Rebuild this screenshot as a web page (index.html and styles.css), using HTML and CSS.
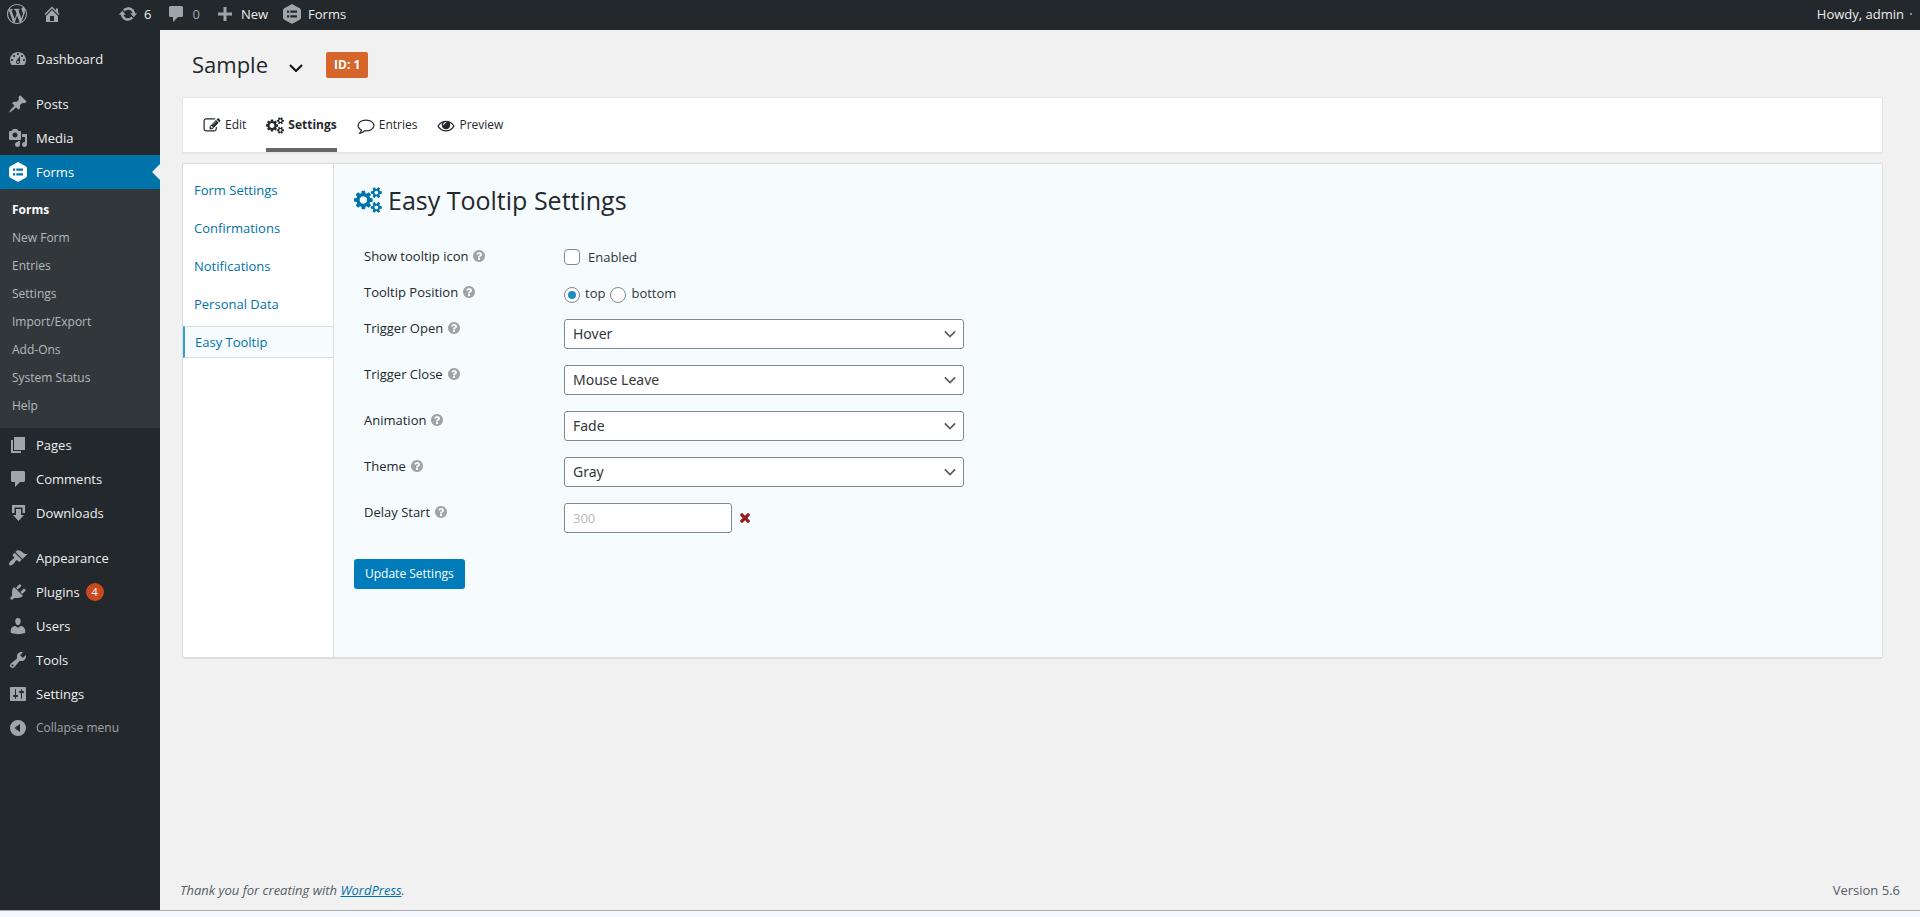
FILE: index.html
```html
<!DOCTYPE html>
<html lang="en">
<head>
<meta charset="utf-8">
<title>Easy Tooltip Settings</title>
<meta name="viewport" content="width=device-width, initial-scale=1">
<link rel="stylesheet" href="styles.css">
</head>
<body>
<svg class="sprite" aria-hidden="true">
  <symbol id="i-wp" viewBox="0 0 20 20"><path d="M20 10c0-5.51-4.49-10-10-10C4.48 0 0 4.49 0 10c0 5.52 4.48 10 10 10 5.51 0 10-4.48 10-10zM7.78 15.37L4.37 6.22c.55-.02 1.17-.08 1.17-.08.5-.06.44-1.13-.06-1.11 0 0-1.45.11-2.37.11-.18 0-.37 0-.58-.01C4.12 2.69 6.87 1.11 10 1.11c2.33 0 4.45.87 6.05 2.34-.68-.11-1.65.39-1.65 1.58 0 .74.45 1.36.9 2.1.35.61.55 1.36.55 2.46 0 1.49-1.4 5-1.4 5l-3.03-8.37c.54-.02.82-.17.82-.17.5-.05.44-1.25-.06-1.22 0 0-1.44.12-2.38.12-.87 0-2.33-.12-2.33-.12-.5-.03-.56 1.2-.06 1.22l.92.08 1.26 3.41zM17.41 10c.24-.64.74-1.87.43-4.25.7 1.29 1.05 2.71 1.05 4.25 0 3.29-1.73 6.24-4.4 7.78.97-2.59 1.94-5.2 2.92-7.78zM6.1 18.09C3.12 16.65 1.11 13.53 1.11 10c0-1.3.23-2.48.72-3.59C3.25 10.3 4.67 14.2 6.1 18.09zm4.03-6.63l2.58 6.98c-.86.29-1.76.45-2.71.45-.79 0-1.57-.11-2.29-.33.81-2.38 1.62-4.74 2.42-7.1z"/></symbol>
  <symbol id="i-home" viewBox="0 0 20 20"><path d="M16 8.5l1.53 1.53-1.06 1.06L10 4.6l-6.47 6.49-1.06-1.06L10 2.5l4 4v-2h2v4zm-6-2.46l6 5.99V18H4v-5.97zM12 17v-5H8v5h4z"/></symbol>
  <symbol id="i-update" viewBox="0 0 20 20"><path d="M10.2 3.28c3.53 0 6.43 2.61 6.92 6h2.08l-3.5 4-3.5-4h2.32c-.45-1.97-2.21-3.45-4.32-3.45-1.45 0-2.73.71-3.54 1.78L4.95 5.66C6.23 4.2 8.11 3.28 10.2 3.28zm-.4 13.44c-3.52 0-6.43-2.61-6.92-6H.8l3.5-4c1.17 1.33 2.33 2.67 3.5 4H5.48c.45 1.97 2.21 3.45 4.32 3.45 1.45 0 2.73-.71 3.54-1.78l1.71 1.95c-1.28 1.46-3.15 2.38-5.25 2.38z"/></symbol>
  <symbol id="i-comment" viewBox="0 0 20 20"><path d="M4.500 2h11c.8 0 1.500.7 1.500 1.500v8c0 .8-.7 1.500-1.500 1.500H12l-5 5v-5H4.500C3.700 13 3 12.300 3 11.500v-8C3 2.700 3.700 2 4.500 2z"/></symbol>
  <symbol id="i-plus" viewBox="0 0 20 20"><path d="M17 8.500v3h-5.500V17h-3v-5.500H3v-3h5.500V3h3v5.500z"/></symbol>
  <symbol id="i-hex" viewBox="0 0 20 20"><path fill-rule="evenodd" d="M8.700.7c.8-.5 1.800-.5 2.600 0l6.400 3.600c.8.500 1.300 1.300 1.300 2.200v7c0 .9-.5 1.700-1.300 2.200l-6.400 3.600c-.8.500-1.800.5-2.600 0l-6.400-3.600C1.500 15.200 1 14.400 1 13.500v-7c0-.9.500-1.700 1.300-2.200zM5 6.500v2.200h2.200V6.500zm3.300 0v2.200H15V6.500zM5 11.300v2.200h2.200v-2.200zm3.300 0v2.200H15v-2.200z"/></symbol>
  <symbol id="i-dashboard" viewBox="0 0 20 20"><path d="M3.760 16h12.480c1.100-1.370 1.760-3.110 1.760-5 0-4.420-3.580-8-8-8s-8 3.580-8 8c0 1.890.66 3.630 1.760 5zM10 4c.55 0 1 .45 1 1s-.45 1-1 1-1-.45-1-1 .45-1 1-1zM6 6c.55 0 1 .45 1 1s-.45 1-1 1-1-.45-1-1 .45-1 1-1zm8 0c.55 0 1 .45 1 1s-.45 1-1 1-1-.45-1-1 .45-1 1-1zm-5.370 5.550L12 7v6c0 1.100-.9 2-2 2s-2-.9-2-2c0-.57.24-1.080.63-1.450zM4 10c.55 0 1 .45 1 1s-.45 1-1 1-1-.45-1-1 .45-1 1-1zm12 0c.55 0 1 .45 1 1s-.45 1-1 1-1-.45-1-1 .45-1 1-1zm-5 3c0-.55-.45-1-1-1s-1 .45-1 1 .45 1 1 1 1-.45 1-1z"/></symbol>
  <symbol id="i-post" viewBox="0 0 20 20"><path d="M10.440 3.020l1.820-1.820 6.360 6.350-1.830 1.820c-1.050-.68-2.480-.57-3.410.36l-.75.75c-.92.93-1.040 2.350-.35 3.410l-1.830 1.820-2.410-2.410-2.800 2.790c-.42.42-3.380 2.710-3.800 2.290s1.860-3.390 2.280-3.810l2.790-2.790L4.100 9.360l1.830-1.820c1.050.69 2.480.57 3.400-.36l.75-.75c.93-.92 1.050-2.350.36-3.410z"/></symbol>
  <symbol id="i-media" viewBox="0 0 20 20"><path d="M13 11V4c0-.55-.45-1-1-1h-1.670L9 1H5L3.670 3H2c-.55 0-1 .45-1 1v7c0 .55.45 1 1 1h10c.55 0 1-.45 1-1zM7 4.500c1.380 0 2.500 1.120 2.500 2.500S8.380 9.500 7 9.500 4.500 8.380 4.500 7 5.620 4.500 7 4.500zM14 6h5v10.500c0 1.380-1.120 2.500-2.500 2.500S14 17.880 14 16.500s1.120-2.500 2.500-2.500c.17 0 .34.02.5.05V9h-3V6zm-4 8.050V13h2v3.500c0 1.380-1.120 2.500-2.500 2.500S7 17.880 7 16.500 8.120 14 9.500 14c.17 0 .34.02.5.05z"/></symbol>
  <symbol id="i-page" viewBox="0 0 20 20"><path d="M6 15V2h11v13H6zm-1 1h8v2H3V5h2v11z"/></symbol>
  <symbol id="i-download" viewBox="0 0 20 20"><path d="M4 2h13v8h-2.500V4.500h-8V10H4zM8 6h5v6h3l-5.500 6L5 12h3z"/></symbol>
  <symbol id="i-appearance" viewBox="0 0 20 20"><path d="M14.480 11.060L7.410 3.990l1.500-1.500c.5-.56 2.300-.47 3.510.32 1.210.8 1.430 1.280 2.910 2.100 1.180.64 2.450 1.260 4.450.85zm-.71.71L6.700 4.700 4.930 6.470c-.39.39-.39 1.020 0 1.410l1.060 1.060c.39.39.39 1.030 0 1.420-.6.6-1.430 1.110-2.210 1.690-.35.26-.7.53-1.010.84C1.430 14.230.4 16.080 1.400 17.070c.99 1 2.840-.03 4.180-1.360.31-.31.58-.66.85-1.020.57-.78 1.080-1.610 1.690-2.210.39-.39 1.020-.39 1.410 0l1.060 1.060c.39.39 1.020.39 1.410 0z"/></symbol>
  <symbol id="i-plugins" viewBox="0 0 20 20"><path d="M13.110 4.360L9.870 7.600 8 5.730l3.240-3.240c.35-.34 1.050-.2 1.560.32.52.51.66 1.210.31 1.550zm-8 1.770l.91-1.120 9.010 9.010-1.190.84c-.71.71-2.630 1.160-3.820 1.160H6.140L4.900 17.260c-.59.59-1.540.59-2.120 0-.59-.58-.59-1.530 0-2.120l1.240-1.240v-3.880c0-1.130.4-3.190 1.090-3.890zm7.260 3.970l3.240-3.240c.34-.35 1.040-.21 1.550.31.52.51.66 1.210.31 1.550l-3.240 3.250z"/></symbol>
  <symbol id="i-users" viewBox="0 0 20 20"><path d="M10 9.250c-2.270 0-2.730-3.440-2.730-3.440C7 4.020 7.820 2 9.970 2c2.160 0 2.980 2.020 2.710 3.810 0 0-.41 3.440-2.680 3.440zm0 2.570L12.720 10c2.390 0 4.520 2.330 4.520 4.530v2.490s-3.650 1.130-7.240 1.130c-3.650 0-7.240-1.130-7.240-1.130v-2.490c0-2.250 1.940-4.480 4.470-4.480z"/></symbol>
  <symbol id="i-tools" viewBox="0 0 20 20"><path d="M16.680 9.770c-1.340 1.340-3.300 1.670-4.950.99l-5.410 6.520c-.99.99-2.590.99-3.580 0s-.99-2.590 0-3.570l6.520-5.420c-.68-1.650-.35-3.610.99-4.950 1.280-1.280 3.120-1.620 4.720-1.060l-2.890 2.890 2.820 2.820 2.860-2.870c.53 1.580.18 3.390-1.080 4.650zM3.810 16.210c.4.39 1.040.39 1.430 0 .4-.4.4-1.040 0-1.430-.39-.4-1.030-.4-1.430 0-.39.39-.39 1.030 0 1.430z"/></symbol>
  <symbol id="i-settings" viewBox="0 0 20 20"><path d="M18 16V4c0-.55-.45-1-1-1H3c-.55 0-1 .45-1 1v12c0 .55.45 1 1 1h14c.55 0 1-.45 1-1zM8 11h1c.55 0 1 .45 1 1s-.45 1-1 1H8v1.500c0 .28-.22.5-.5.5s-.5-.22-.5-.5V13H6c-.55 0-1-.45-1-1s.45-1 1-1h1V5.500c0-.28.22-.5.5-.5s.5.22.5.5V11zm5-2h-1c-.55 0-1-.45-1-1s.45-1 1-1h1V5.500c0-.28.22-.5.5-.5s.5.22.5.5V7h1c.55 0 1 .45 1 1s-.45 1-1 1h-1v5.500c0 .28-.22.5-.5.5s-.5-.22-.5-.5V9z"/></symbol>
  <symbol id="i-collapse" viewBox="0 0 20 20"><path fill-rule="evenodd" d="M10 2a8 8 0 1 0 0 16 8 8 0 0 0 0-16zm2 12L6.500 10 12 6z"/></symbol>
  <symbol id="i-edit" viewBox="0 0 1792 1792"><path d="M888 1184l116-116-152-152-116 116v56h96v96h56zm440-720q-16-16-33 1l-350 350q-17 17-1 33t33-1l350-350q17-17 1-33zm80 594v190q0 119-84.500 203.500t-203.500 84.500h-832q-119 0-203.500-84.500t-84.500-203.500v-832q0-119 84.500-203.500t203.500-84.500h832q63 0 117 25 15 7 18 23 3 17-9 29l-49 49q-14 14-32 8-23-6-45-6h-832q-66 0-113 47t-47 113v832q0 66 47 113t113 47h832q66 0 113-47t47-113v-126q0-13 9-22l64-64q15-15 35-7t20 29zm-96-738l288 288-672 672h-288v-288zm444 132l-92 92-288-288 92-92q28-28 68-28t68 28l152 152q28 28 28 68t-28 68z"/></symbol>
  <symbol id="i-cogs" viewBox="0 0 1920 1792"><path d="M896 896q0-106-75-181t-181-75-181 75-75 181 75 181 181 75 181-75 75-181zm768 512q0-52-38-90t-90-38-90 38-38 90q0 53 37.500 90.500t90.500 37.500 90.500-37.500 37.500-90.500zm0-1024q0-52-38-90t-90-38-90 38-38 90q0 53 37.500 90.500t90.500 37.500 90.500-37.500 37.500-90.500zm-384 421v185q0 10-7 19.500t-16 10.500l-155 24q-11 35-32 76 34 48 90 115 7 11 7 20 0 12-7 19-23 30-82.500 89.500t-78.500 59.500q-11 0-21-7l-115-90q-37 19-77 31-11 108-23 155-7 24-30 24h-186q-11 0-20-7.500t-10-17.500l-23-153q-34-10-75-31l-118 89q-7 7-20 7-11 0-21-8-144-133-144-160 0-9 7-19 10-14 41-53t47-61q-23-44-35-82l-152-24q-10-1-17-9.500t-7-19.500v-185q0-10 7-19.500t16-10.500l155-24q11-35 32-76-34-48-90-115-7-11-7-20 0-12 7-20 22-30 82-89t79-59q11 0 21 7l115 90q34-18 77-32 11-108 23-154 7-24 30-24h186q11 0 20 7.500t10 17.500l23 153q34 10 75 31l118-89q8-7 20-7 11 0 21 8 144 133 144 160 0 8-7 19-12 16-42 54t-45 60q23 48 34 82l152 23q10 2 17 10.500t7 19.500zm640 533v140q0 16-149 31-12 27-30 52 51 113 51 138 0 4-4 7-122 71-124 71-8 0-46-47t-52-68q-20 2-30 2t-30-2q-14 21-52 68t-46 47q-2 0-124-71-4-3-4-7 0-25 51-138-18-25-30-52-149-15-149-31v-140q0-16 149-31 13-29 30-52-51-113-51-138 0-4 4-7 4-2 35-20t59-34 30-16q8 0 46 46.500t52 67.500q20-2 30-2t30 2q51-71 92-112l6-2q4 0 124 70 4 3 4 7 0 25-51 138 17 23 30 52 149 15 149 31zm0-1024v140q0 16-149 31-12 27-30 52 51 113 51 138 0 4-4 7-122 71-124 71-8 0-46-47t-52-68q-20 2-30 2t-30-2q-14 21-52 68t-46 47q-2 0-124-71-4-3-4-7 0-25 51-138-18-25-30-52-149-15-149-31v-140q0-16 149-31 13-29 30-52-51-113-51-138 0-4 4-7 4-2 35-20t59-34 30-16q8 0 46 46.500t52 67.500q20-2 30-2t30 2q51-71 92-112l6-2q4 0 124 70 4 3 4 7 0 25-51 138 17 23 30 52 149 15 149 31z"/></symbol>
  <symbol id="i-bubble" viewBox="0 0 1792 1792"><path d="M896 384q-204 0-381.500 69.500t-282 187.500-104.500 255q0 112 71.500 213.500t201.500 175.500l87 50-27 96q-24 91-70 172 152-63 275-171l43-38 57 6q69 8 130 8 204 0 381.500-69.500t282-187.500 104.500-255-104.500-255-282-187.500-381.500-69.500zm896 512q0 174-120 321.500t-326 233-450 85.500q-70 0-145-8-198 175-460 242-49 14-114 22h-5q-15 0-27-10.500t-16-27.500v-1q-3-4-.5-12t2-10 4.500-9.500l6-9 7-8.500 8-9q7-8 31-34.500t34.500-38 31-39.500 32.500-51 27-59 26-76q-157-89-247.500-220t-90.500-281q0-130 71-248.500t191-204.500 286-136.500 348-50.500 348 50.500 286 136.500 191 204.500 71 248.500z"/></symbol>
  <symbol id="i-eye" viewBox="0 0 1792 1792"><path d="M1664 960q-152-236-381-353 61 104 61 225 0 185-131.500 316.500t-316.500 131.500-316.500-131.500-131.500-316.500q0-121 61-225-229 117-381 353 133 205 333.500 326.500t434.500 121.500 434.500-121.500 333.500-326.500zm-720-384q0-20-14-34t-34-14q-125 0-214.500 89.500t-89.500 214.500q0 20 14 34t34 14 34-14 14-34q0-86 61-147t147-61q20 0 34-14t14-34zm848 384q0 34-20 69-140 230-376.500 368.500t-499.500 138.500-499.500-139-376.500-368q-20-35-20-69t20-69q140-229 376.500-368t499.500-139 499.500 139 376.500 368q20 35 20 69z"/></symbol>
  <symbol id="i-help" viewBox="128 128 1536 1536"><path d="M1024 1376v-192q0-14-9-23t-23-9h-192q-14 0-23 9t-9 23v192q0 14 9 23t23 9h192q14 0 23-9t9-23zm256-672q0-88-55.500-163t-138.500-116-170-41q-243 0-371 213-15 24 8 42l132 100q7 6 19 6 16 0 25-12 53-68 86-92 34-24 86-24 48 0 85.500 26t37.500 59q0 38-20 61t-68 45q-63 28-115.500 86.500t-52.500 125.500v36q0 14 9 23t23 9h192q14 0 23-9t9-23q0-19 21.500-49.500t54.500-49.500q32-18 49-28.500t46-35 44.500-48 28-60.500 12.500-81zm384 192q0 209-103 385.500t-279.500 279.500-385.500 103-385.500-103-279.500-279.500-103-385.500 103-385.500 279.500-279.500 385.500-103 385.500 103 279.500 279.500 103 385.500z"/></symbol>
  <symbol id="i-times" viewBox="302 366 1188 1188"><path d="M1490 1322q0 40-28 68l-136 136q-28 28-68 28t-68-28l-294-294-294 294q-28 28-68 28t-68-28l-136-136q-28-28-28-68t28-68l294-294-294-294q-28-28-28-68t28-68l136-136q28-28 68-28t68 28l294 294 294-294q28-28 68-28t68 28l136 136q28 28 28 68t-28 68l-294 294 294 294q28 28 28 68z"/></symbol>
  <symbol id="i-chevron" viewBox="0 0 14 8"><path d="M1 1l6 6 6-6" fill="none" stroke="currentColor" stroke-width="2"/></symbol>
</svg>

<header class="adminbar">
  <a href="#" class="bar-item bar-logo" aria-label="About WordPress"><svg class="icon"><use href="#i-wp"/></svg></a>
  <a href="#" class="bar-item bar-home" aria-label="Visit site"><svg class="icon"><use href="#i-home"/></svg></a>
  <a href="#" class="bar-item bar-updates"><svg class="icon"><use href="#i-update"/></svg><span>6</span></a>
  <a href="#" class="bar-item bar-comments"><svg class="icon"><use href="#i-comment"/></svg><span>0</span></a>
  <a href="#" class="bar-item bar-new"><svg class="icon"><use href="#i-plus"/></svg><span>New</span></a>
  <a href="#" class="bar-item bar-forms"><svg class="icon"><use href="#i-hex"/></svg><span>Forms</span></a>
  <a href="#" class="bar-item bar-user"><span>Howdy, admin</span><i class="avatar"></i></a>
</header>

<div class="layout">
  <nav class="sidebar" aria-label="Main menu">
    <ul class="menu">
      <li><a href="#"><svg class="icon"><use href="#i-dashboard"/></svg>Dashboard</a></li>
      <li class="group"><a href="#"><svg class="icon"><use href="#i-post"/></svg>Posts</a></li>
      <li><a href="#"><svg class="icon"><use href="#i-media"/></svg>Media</a></li>
      <li class="current"><a href="#"><svg class="icon"><use href="#i-hex"/></svg>Forms</a>
        <ul class="submenu">
          <li><a href="#" class="active">Forms</a></li>
          <li><a href="#">New Form</a></li>
          <li><a href="#">Entries</a></li>
          <li><a href="#">Settings</a></li>
          <li><a href="#">Import/Export</a></li>
          <li><a href="#">Add-Ons</a></li>
          <li><a href="#">System Status</a></li>
          <li><a href="#">Help</a></li>
        </ul>
      </li>
      <li><a href="#"><svg class="icon"><use href="#i-page"/></svg>Pages</a></li>
      <li><a href="#"><svg class="icon"><use href="#i-comment"/></svg>Comments</a></li>
      <li><a href="#"><svg class="icon"><use href="#i-download"/></svg>Downloads</a></li>
      <li class="group"><a href="#"><svg class="icon"><use href="#i-appearance"/></svg>Appearance</a></li>
      <li><a href="#"><svg class="icon"><use href="#i-plugins"/></svg>Plugins<span class="count">4</span></a></li>
      <li><a href="#"><svg class="icon"><use href="#i-users"/></svg>Users</a></li>
      <li><a href="#"><svg class="icon"><use href="#i-tools"/></svg>Tools</a></li>
      <li><a href="#"><svg class="icon"><use href="#i-settings"/></svg>Settings</a></li>
      <li><button type="button" class="collapse"><svg class="icon"><use href="#i-collapse"/></svg>Collapse menu</button></li>
    </ul>
  </nav>

  <main class="content">
    <div class="form-header">
      <h1>Sample</h1>
      <button type="button" class="switcher" aria-label="Switch form"><svg class="chevron"><use href="#i-chevron"/></svg></button>
      <span class="id-badge">ID: 1</span>
    </div>

    <nav class="toolbar" aria-label="Form">
      <a href="#"><svg class="tab-icon"><use href="#i-edit"/></svg>Edit</a>
      <a href="#" class="active"><svg class="tab-icon"><use href="#i-cogs"/></svg>Settings</a>
      <a href="#"><svg class="tab-icon"><use href="#i-bubble"/></svg>Entries</a>
      <a href="#"><svg class="tab-icon"><use href="#i-eye"/></svg>Preview</a>
    </nav>

    <div class="panel">
      <nav class="tabs" aria-label="Settings">
        <a href="#">Form Settings</a>
        <a href="#">Confirmations</a>
        <a href="#">Notifications</a>
        <a href="#">Personal Data</a>
        <a href="#" class="active">Easy Tooltip</a>
      </nav>
      <form class="settings">
        <h2><svg class="title-icon"><use href="#i-cogs"/></svg>Easy Tooltip Settings</h2>
        <div class="fields">
          <span class="label">Show tooltip icon <svg class="help"><use href="#i-help"/></svg></span>
          <div class="choices">
            <input type="checkbox" id="enabled"><label for="enabled" class="check-label">Enabled</label>
          </div>
          <span class="label">Tooltip Position <svg class="help"><use href="#i-help"/></svg></span>
          <div class="choices">
            <input type="radio" name="pos" id="pos-top" checked><label for="pos-top">top</label>
            <input type="radio" name="pos" id="pos-bottom"><label for="pos-bottom">bottom</label>
          </div>
          <label class="label" for="open">Trigger Open <svg class="help"><use href="#i-help"/></svg></label>
          <div class="select"><select id="open"><option>Hover</option></select><svg class="chevron"><use href="#i-chevron"/></svg></div>
          <label class="label" for="close">Trigger Close <svg class="help"><use href="#i-help"/></svg></label>
          <div class="select"><select id="close"><option>Mouse Leave</option></select><svg class="chevron"><use href="#i-chevron"/></svg></div>
          <label class="label" for="animation">Animation <svg class="help"><use href="#i-help"/></svg></label>
          <div class="select"><select id="animation"><option>Fade</option></select><svg class="chevron"><use href="#i-chevron"/></svg></div>
          <label class="label" for="theme">Theme <svg class="help"><use href="#i-help"/></svg></label>
          <div class="select"><select id="theme"><option>Gray</option></select><svg class="chevron"><use href="#i-chevron"/></svg></div>
          <label class="label" for="delay">Delay Start <svg class="help"><use href="#i-help"/></svg></label>
          <div class="delay"><input type="text" id="delay" placeholder="300"><svg class="invalid"><use href="#i-times"/></svg></div>
        </div>
        <button type="submit" class="primary">Update Settings</button>
      </form>
    </div>

    <footer class="footer">
      <em>Thank you for creating with <a href="#">WordPress</a>.</em>
      <span>Version 5.6</span>
    </footer>
  </main>
</div>
<div class="page-edge"></div>
</body>
</html>
```

FILE: styles.css
```css
* {
  box-sizing: border-box;
}

body {
  margin: 0;
  min-height: 100vh;
  display: flex;
  flex-direction: column;
  background: #f1f1f1;
  color: #32373c;
  font: 13px/18px "Open Sans", "Noto Sans", sans-serif;
}

a {
  color: #0073aa;
}

ul {
  margin: 0;
  padding: 0;
  list-style: none;
}

button {
  font: inherit;
}

svg {
  fill: currentColor;
  flex: none;
}

.sprite {
  display: none;
}

.icon {
  width: 20px;
  height: 20px;
  color: #a0a5aa;
}

/* Admin bar */

.adminbar {
  display: flex;
  align-items: center;
  height: 30px;
  padding: 0 8px 2px 7px;
  background: #23282d;
}

.bar-item {
  display: flex;
  align-items: center;
  gap: 6px;
  color: #eee;
  text-decoration: none;
}

.bar-home {
  margin-left: 15px;
}

.bar-updates {
  margin-left: 56px;
}

.bar-comments {
  margin-left: 15px;
  color: #a0a5aa;
}

.bar-new {
  margin-left: 15px;
}

.bar-forms {
  margin-left: 14px;
}

.bar-user {
  margin-left: auto;
}

.avatar {
  width: 2px;
  height: 2px;
  background: #82878c;
}

/* Sidebar */

.layout {
  flex: 1;
  display: flex;
}

.sidebar {
  flex: none;
  width: 160px;
  padding-top: 12px;
  background: #23282d;
}

.menu > li > a,
.collapse {
  position: relative;
  display: flex;
  align-items: center;
  gap: 8px;
  width: 100%;
  height: 34px;
  padding: 0 8px;
  color: #eee;
  font-size: 13px;
  text-decoration: none;
}

.menu > .group {
  margin-top: 11px;
}

.menu > .current > a {
  background: #0073aa;
  color: #fff;
}

.current .icon {
  color: #fff;
}

.current > a::after {
  content: "";
  position: absolute;
  right: 0;
  top: 9px;
  border: 8px solid transparent;
  border-left-width: 0;
  border-right-color: #f1f1f1;
}

.submenu {
  padding: 7px 0 8px;
  background: #32373c;
}

.submenu a {
  display: block;
  padding: 5px 12px;
  color: #b4b9be;
  font-size: 12px;
  text-decoration: none;
}

.submenu .active {
  color: #fff;
  font-weight: 700;
}

.count {
  width: 18px;
  height: 18px;
  margin-left: -2px;
  border-radius: 9px;
  background: #ca4a1f;
  color: #fff;
  font-size: 11px;
  line-height: 18px;
  text-align: center;
}

.menu .collapse {
  border: 0;
  background: none;
  color: #a0a5aa;
  font-size: 12px;
}

/* Content */

.content {
  flex: 1;
  display: flex;
  flex-direction: column;
  padding: 22px 20px 0;
}

.form-header {
  display: flex;
  align-items: center;
  height: 26px;
  padding-left: 12px;
}

h1 {
  margin: 0 0 2px;
  color: #23282d;
  font-size: 22px;
  font-weight: 400;
  line-height: 26px;
}

.switcher {
  margin: 6px 23px 0 21px;
  padding: 0;
  border: 0;
  background: none;
  color: #111;
  line-height: 0;
}

.chevron {
  width: 14px;
  height: 8px;
}

.id-badge {
  padding: 4px 8px;
  border-radius: 2px;
  background: #d5652a;
  color: #fff;
  font-size: 12px;
  font-weight: 700;
}

.toolbar {
  display: flex;
  gap: 20px;
  height: 56px;
  margin: 19px 17px 0 2px;
  padding: 0 20px;
  border: 1px solid #e5e5e5;
  background: #fff;
  box-shadow: 0 1px 1px rgba(0, 0, 0, 0.04);
}

.toolbar a {
  display: flex;
  align-items: center;
  gap: 4px;
  padding-top: 4px;
  border-bottom: 4px solid transparent;
  color: #23282d;
  font-size: 12px;
  text-decoration: none;
}

.toolbar .active {
  border-bottom-color: #666;
  font-weight: 700;
}

.tab-icon {
  width: 18px;
  height: 17px;
}

.panel {
  display: flex;
  min-height: 496px;
  margin: 10px 17px 0 2px;
  border: 1px solid #ddd;
  border-bottom-width: 2px;
  border-radius: 3px;
  background: #fff;
}

.tabs {
  flex: none;
  width: 151px;
  padding-top: 10px;
  border-right: 1px solid #dcdfe2;
}

.tabs a {
  display: block;
  margin-bottom: 6px;
  padding: 7px 11px;
  text-decoration: none;
}

.tabs .active {
  padding: 6px 10px;
  border: solid #ddd;
  border-width: 1px 0 1px 2px;
  border-left-color: #2ea2cc;
  background: #f6fbfd;
}

.settings {
  flex: 1;
  padding: 20px;
  background: #f6fbfe;
}

h2 {
  display: flex;
  align-items: center;
  gap: 6px;
  margin: 0 0 31px;
  color: #23282d;
  font-size: 25px;
  font-weight: 500;
  line-height: 32px;
}

.title-icon {
  width: 28px;
  height: 26px;
  color: #0073aa;
}

.fields {
  display: grid;
  grid-template-columns: 200px minmax(0, 400px);
  row-gap: 16px;
  margin-left: 10px;
}

.label {
  display: flex;
  align-items: center;
  gap: 5px;
  height: 18px;
  color: #23282d;
}

.help {
  width: 12px;
  height: 12px;
  color: #a0a2a4;
}

.choices {
  display: flex;
  align-items: center;
  gap: 5px;
  height: 20px;
}

.choices input {
  appearance: none;
  display: grid;
  place-items: center;
  width: 16px;
  height: 16px;
  margin: 0;
  border: 1px solid #7e8993;
  border-radius: 4px;
  background: #fff;
}

.choices input[type="radio"] {
  margin-top: 3px;
  border-radius: 50%;
}

.choices input:checked::before {
  content: "";
  width: 8px;
  height: 8px;
  border-radius: 50%;
  background: #1e8cbe;
}

.choices .check-label {
  margin-left: 3px;
}

.select {
  position: relative;
}

select,
.delay input {
  display: block;
  height: 30px;
  padding: 0 8px;
  border: 1px solid #7e8993;
  border-radius: 3px;
  background: #fff;
  color: #32373c;
  font: 14px/28px "Noto Sans", sans-serif;
}

select {
  appearance: none;
  width: 100%;
}

.select .chevron {
  position: absolute;
  right: 8px;
  top: 11px;
  width: 12px;
  color: #555d66;
  pointer-events: none;
}

.delay {
  display: flex;
  align-items: center;
  gap: 8px;
}

.delay input {
  width: 168px;
  font-size: 13px;
}

.delay input::placeholder {
  color: #b9bcbf;
  opacity: 1;
}

.invalid {
  width: 10px;
  height: 10px;
  color: #951b1b;
}

.primary {
  height: 30px;
  margin-top: 26px;
  padding: 0 11px;
  border: 0;
  border-radius: 3px;
  background: #007cba;
  color: #fff;
  font-size: 12px;
  font-weight: 500;
}

.footer {
  display: flex;
  justify-content: space-between;
  margin-top: auto;
  padding: 0 0 11px;
  color: #555d66;
}

.page-edge {
  height: 7px;
  border-top: 1px solid #aaa9ae;
  background: #f5f9fe;
}
```
